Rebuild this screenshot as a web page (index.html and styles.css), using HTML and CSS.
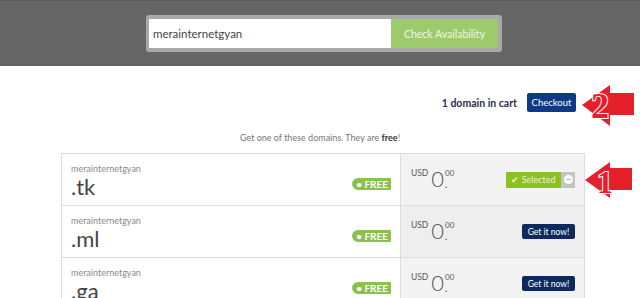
FILE: index.html
```html
<!DOCTYPE html>
<html lang="en">
<head>
    <meta charset="UTF-8">
    <title>Domain Checker</title>
    <link rel="stylesheet" href="styles.css">
</head>
<body>
    <!-- search bar -->
    <div class="header">
        <form class="search">
            <input type="text" class="search-input" value="merainternetgyan">
            <button type="button" class="search-btn">Check Availability</button>
        </form>
    </div>

    <div class="cart-bar">
        <span class="cart-count">1 domain in cart</span>
        <button class="btn-checkout">Checkout</button>
        <svg class="marker marker-2" width="56" height="42" viewBox="0 0 56 42">
            <polygon points="0,20 28,0 28,8 52,8 52,30 28,30 28,41" fill="#e5202a"/>
            <text x="9" y="33" font-family="Liberation Serif, serif" font-weight="bold" font-size="36" fill="#e5202a" stroke="#fff" stroke-width="2" paint-order="stroke">2</text>
        </svg>
    </div>

    <p class="lead">Get one of these domains. They are <b>free</b>!</p>

    <div class="domains">
        <div class="row">
            <div class="name-cell">
                <div class="sld">merainternetgyan</div>
                <div class="tld">.tk</div>
                <span class="free">&bull; FREE</span>
            </div>
            <div class="price-cell">
                <div class="price"><span class="cur">USD</span><span class="big">0</span><span class="cents"><span>00</span><span class="dot">.</span></span></div>
                <div class="selected">
                    <span class="sel-main">&#10004; Selected</span>
                    <span class="sel-remove"><svg width="9" height="9" viewBox="0 0 10 10"><circle cx="5" cy="5" r="5" fill="#fff"/><rect x="2" y="4.2" width="6" height="1.6" fill="#c4c4c4"/></svg></span>
                </div>
                <svg class="marker marker-1" width="48" height="37" viewBox="0 0 48 37">
                    <polygon points="0,18 25,0 25,6 47,6 47,28 25,28 25,36" fill="#e5202a"/>
                    <text x="12" y="31" font-family="Liberation Serif, serif" font-weight="bold" font-size="32" fill="#e5202a" stroke="#fff" stroke-width="2" paint-order="stroke">1</text>
                </svg>
            </div>
        </div>
        <div class="row">
            <div class="name-cell">
                <div class="sld">merainternetgyan</div>
                <div class="tld">.ml</div>
                <span class="free">&bull; FREE</span>
            </div>
            <div class="price-cell alt">
                <div class="price"><span class="cur">USD</span><span class="big">0</span><span class="cents"><span>00</span><span class="dot">.</span></span></div>
                <button class="btn-get">Get it now!</button>
            </div>
        </div>
        <div class="row">
            <div class="name-cell">
                <div class="sld">merainternetgyan</div>
                <div class="tld">.ga</div>
                <span class="free">&bull; FREE</span>
            </div>
            <div class="price-cell">
                <div class="price"><span class="cur">USD</span><span class="big">0</span><span class="cents"><span>00</span><span class="dot">.</span></span></div>
                <button class="btn-get">Get it now!</button>
            </div>
        </div>
    </div>
</body>
</html>
```

FILE: styles.css
```css
body {
    margin: 0;
    font-family: Lato, 'Open Sans', sans-serif;
    color: #444;
    background: #fff;
}
.header {
    height: 66px;
    background: #666;
    border-top: 1px solid #5a5a5a;
    box-sizing: border-box;
    padding-top: 14px;
}
.search {
    display: flex;
    width: 356px;
    margin: 0 0 0 146px;
    padding: 4px 4px 4px 3px;
    box-sizing: border-box;
    background: #a9a9a9;
    border-radius: 3px;
}
.search-input {
    width: 242px;
    height: 29px;
    border: none;
    padding: 0 4px;
    box-sizing: border-box;
    font-family: Lato, sans-serif;
    font-size: 11.5px;
    color: #444;
    outline: none;
}
.search-btn {
    flex: 1;
    height: 29px;
    border: none;
    background: #9dcb6b;
    color: #eef6e6;
    font-family: Lato, sans-serif;
    font-size: 10.5px;
    border-radius: 0 2px 2px 0;
}
.cart-bar {
    position: relative;
    display: flex;
    justify-content: flex-end;
    align-items: center;
    gap: 10px;
    padding: 27px 64px 0 0;
    height: 19px;
}
.cart-count {
    font-size: 10.5px;
    font-weight: bold;
    color: #283048;
}
.btn-checkout {
    width: 49px;
    height: 19px;
    padding: 0;
    border: none;
    border-radius: 2px;
    background: #0c3a86;
    color: #fff;
    font-family: Lato, sans-serif;
    font-size: 9.5px;
}
.marker {
    position: absolute;
    overflow: visible;
}
.marker-2 {
    left: 582px;
    top: 19px;
}
.lead {
    margin: 20px 0 0;
    text-align: center;
    font-size: 9px;
    color: #777;
    height: 13px;
}
.lead b {
    color: #333;
    font-weight: bold;
}
.domains {
    margin: 8px 0 0 61px;
    width: 524px;
    border-top: 1px solid #ddd;
}
.row {
    display: flex;
    height: 51px;
    border-bottom: 1px solid #ddd;
}
.name-cell {
    position: relative;
    width: 340px;
    border-left: 1px solid #ddd;
    border-right: 1px solid #ddd;
    padding: 9px 0 0 9px;
    box-sizing: border-box;
    background: #fff;
}
.sld {
    font-size: 9px;
    color: #8a8a8a;
    line-height: 12px;
}
.tld {
    font-size: 22px;
    line-height: 24px;
    color: #444;
}
.free {
    position: absolute;
    right: 9px;
    top: 24px;
    height: 12px;
    line-height: 12px;
    padding: 0 3px 0 4px;
    background: #8cc152;
    color: #fff;
    font-size: 10px;
    font-weight: bold;
    border-radius: 6px 1px 1px 6px;
}
.price-cell {
    position: relative;
    flex: 1;
    display: flex;
    align-items: center;
    justify-content: space-between;
    padding: 0 9px 0 10px;
    background: #f3f3f3;
    border-right: 1px solid #ddd;
}
.price-cell.alt {
    background: #eeeeee;
}
.price {
    display: flex;
    align-items: flex-start;
    color: #555;
    margin-top: -1px;
}
.cur {
    font-size: 8.5px;
    line-height: 11px;
    margin: 0 3px 0 0;
}
.big {
    font-size: 22px;
    line-height: 22px;
    font-weight: 300;
}
.cents {
    display: flex;
    flex-direction: column;
    gap: 2px;
    font-size: 8px;
    line-height: 10px;
    margin-left: 1px;
}
.cents .dot {
    font-size: 9px;
    line-height: 10px;
    font-weight: bold;
}
.selected {
    display: flex;
    height: 16px;
}
.sel-main {
    width: 55px;
    background: #8cc21f;
    color: #e8f3d0;
    font-size: 9px;
    line-height: 16px;
    text-align: center;
}
.sel-remove {
    width: 14px;
    background: #c4c4c4;
    display: flex;
    align-items: center;
    justify-content: center;
}
.marker-1 {
    left: 184px;
    top: 8px;
}
.btn-get {
    width: 53px;
    height: 15px;
    padding: 0;
    border: none;
    border-radius: 2px;
    background: #0d2a5e;
    color: #fff;
    font-family: Lato, sans-serif;
    font-size: 8.5px;
}
```
